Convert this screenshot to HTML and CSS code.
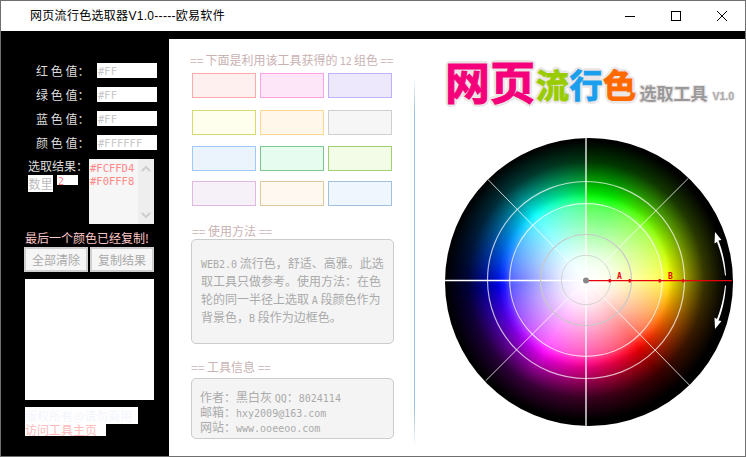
FILE: index.html
```html
<!DOCTYPE html>
<html lang="zh-CN">
<head>
<meta charset="utf-8">
<title>网页流行色选取器</title>
<link rel="stylesheet" href="styles.css">
</head>
<body>
<div class="window">
  <header class="titlebar">
    <span class="title">网页流行色选取器V1.0-----欧易软件</span>
    <div class="controls">
      <svg class="ctl" width="46" height="30" viewBox="0 0 46 30"><path d="M18 15.500h10" stroke="#000" fill="none"/></svg>
      <svg class="ctl" width="46" height="30" viewBox="0 0 46 30"><rect x="18.500" y="10.500" width="9" height="9" stroke="#000" fill="none"/></svg>
      <svg class="ctl" width="46" height="30" viewBox="0 0 46 30"><path d="M18 10l10 10M28 10l-10 10" stroke="#000" fill="none"/></svg>
    </div>
  </header>
  <div class="topbar"></div>
  <div class="content">
    <aside class="sidebar">
      <div class="fields">
        <div class="field"><span class="field-label">红 色 值&#65306;</span><span class="value"><span class="latin">#FF</span></span></div>
        <div class="field"><span class="field-label">绿 色 值&#65306;</span><span class="value"><span class="latin">#FF</span></span></div>
        <div class="field"><span class="field-label">蓝 色 值&#65306;</span><span class="value"><span class="latin">#FF</span></span></div>
        <div class="field"><span class="field-label">颜 色 值&#65306;</span><span class="value"><span class="latin">#FFFFFF</span></span></div>
      </div>
      <div class="results">
        <div class="results-left">
          <div class="results-label">选取结果&#65306;</div>
          <div class="qty">
            <span class="qty-label">数里</span>
            <span class="qty-value"><span class="latin">2</span></span>
          </div>
        </div>
        <div class="listbox">
          <div class="list-text latin">#FCFFD4<br>#F0FFF8</div>
          <div class="scroll">
            <svg width="16" height="65" viewBox="0 0 16 65"><path d="M4 12l4-4 4 4M4 54l4 4 4-4" stroke="#cfcfcf" stroke-width="2" fill="none"/></svg>
          </div>
        </div>
      </div>
      <div class="status">最后一个颜色已经复制!</div>
      <div class="buttons">
        <button class="btn">全部清除</button>
        <button class="btn">复制结果</button>
      </div>
      <div class="preview"></div>
      <div class="copyright">版权所有@请勿商用</div>
      <div class="homelink">访问工具主页</div>
    </aside>
    <main class="main">
      <section class="left">
        <h2 class="heading first">== 下面是利用该工具获得的 <span class="latin">12</span> 组色 ==</h2>
        <div class="swatches">
          <div class="sw s1"></div><div class="sw s2"></div><div class="sw s3"></div>
          <div class="sw s4"></div><div class="sw s5"></div><div class="sw s6"></div>
          <div class="sw s7"></div><div class="sw s8"></div><div class="sw s9"></div>
          <div class="sw s10"></div><div class="sw s11"></div><div class="sw s12"></div>
        </div>
        <h2 class="heading second">== 使用方法 ==</h2>
        <div class="panel usage"><span class="latin">WEB2.0</span> 流行色&#65292;舒适、高雅。此选取工具只做参考。使用方法&#65306;在色轮的同一半径上选取 <span class="latin">A</span> 段颜色作为背景色&#65292;<span class="latin">B</span> 段作为边框色。</div>
        <h2 class="heading third">== 工具信息 ==</h2>
        <div class="panel info">
          <div>作者&#65306;黑白灰 <span class="latin">QQ</span>&#65306;<span class="latin">8024114</span></div>
          <div>邮箱&#65306;<span class="latin">hxy2009@163.com</span></div>
          <div>网站&#65306;<span class="latin">www.ooeeoo.com</span></div>
        </div>
      </section>
      <div class="divider"></div>
      <section class="right">
        <div class="logo">
          <span class="lg big pink">网页</span>
          <span class="lg mid green">流</span><span class="lg mid blue">行</span><span class="lg mid orange">色</span>
          <span class="lg small">选取工具</span>
          <span class="lg ver">V1.0</span>
        </div>
        <svg class="wheel" width="288" height="288" viewBox="0 0 288 288">
          <g fill="none" stroke="#fff">
            <path d="M141 0V288" stroke-width="1.300"/>
            <path d="M0 142.500H141" stroke-width="1.300"/>
            <path d="M42.700 41.300L244.300 247M243.300 40.300L40.700 242.700" stroke-width=".8"/>
            <circle cx="141" cy="142" r="98.500" stroke-opacity=".7" stroke-width="1.200"/>
            <circle cx="141" cy="142" r="76.300" stroke-opacity=".75" stroke-width="1.200"/>
          </g>
          <g fill="none" stroke="#c8c8c8">
            <circle cx="141" cy="142" r="45.500" stroke-width="1.200"/>
            <circle cx="141" cy="142" r="24.700" stroke-opacity=".7" stroke-width="1"/>
          </g>
          <path d="M141 142.700H287" stroke="#e8000c" stroke-width="1.300"/>
          <path d="M164.700 141v3.400M184.700 141v3.400M214.700 141v3.400M238.300 141v3.400" stroke="#e8000c" stroke-width="2"/>
          <text class="mark" x="172" y="141">A</text>
          <text class="mark" x="223" y="141">B</text>
          <circle cx="141" cy="142.500" r="3" fill="#888"/>
          <path fill="#fff" d="M270 94l6.500 8-3 .5c4 10 6.500 21 7.500 35h-1c-1.500-13-4-23-8-33.500l-2.500 1.500z"/>
          <path fill="#fff" d="M270 191l6.500-8-3-.5c4-10 6.500-21 7.500-35h-1c-1.500 13-4 23-8 33.500l-2.500-1.500z"/>
        </svg>
      </section>
    </main>
  </div>
</div>
</body>
</html>
```

FILE: styles.css
```css
* { box-sizing: border-box; }
html, body { margin: 0; padding: 0; background: #fff; }
body { font-family: "Noto Sans CJK SC", "Liberation Sans", sans-serif; font-size: 12px; }
.window { width: 746px; height: 457px; border: 1px solid #6f6f6f; display: flex; flex-direction: column; overflow: hidden; background: #fff; }
.titlebar { height: 30px; flex: none; display: flex; align-items: center; justify-content: space-between; padding-left: 29px; background: #fff; }
.title { font-family: "Liberation Sans", "Noto Sans CJK SC", sans-serif; font-size: 12px; letter-spacing: .3px; color: #000; line-height: 30px; }
.controls { display: flex; }
.ctl { display: block; }
.topbar { height: 8px; flex: none; background: #000; }
.content { flex: 1; display: flex; min-height: 0; }
.latin { font-family: "DejaVu Sans Mono", "Liberation Mono", monospace; font-size: 10px; line-height: 0; }

.sidebar { width: 168px; flex: none; background: #000; padding: 24px 0 0 24px; }
.fields { display: flex; flex-direction: column; gap: 9px; }
.field { display: flex; height: 15px; align-items: center; justify-content: space-between; width: 132px; padding-left: 11px; }
.field-label { color: #ddd; font-size: 12px; line-height: 15px; white-space: nowrap; }
.value { width: 60px; height: 15px; background: #fff; color: #c8c8c8; line-height: 14px; padding-left: 1px; display: block; font-size: 12px; }
.value .latin { font-size: 10.500px; }

.results { display: flex; margin-top: 9px; padding-left: 3px; }
.results-left { width: 61px; flex: none; padding-top: 1px; }
.results-label { color: #ddd; line-height: 12px; white-space: nowrap; }
.qty { display: flex; margin-top: 3px; gap: 4px; align-items: flex-start; }
.qty-label { width: 25px; height: 17px; background: #fff; color: #bbb; line-height: 17px; font-size: 12px; text-align: center; }
.qty-value { width: 21px; height: 10px; background: #fff; color: #ff8080; line-height: 10px; padding-left: 1px; display: block; }
.listbox { width: 65px; height: 65px; display: flex; background: #f6f6f6; }
.list-text { flex: 1; color: #ff8888; line-height: 13px; padding: 3px 0 0 1px; font-size: 10.500px; }
.scroll { width: 16px; flex: none; background: #eee; }
.scroll svg { display: block; }

.status { margin-top: 7px; color: #ffc8c8; line-height: 14px; height: 14px; white-space: nowrap; }
.buttons { display: flex; gap: 2px; margin-top: 2px; margin-left: -1px; }
.btn { width: 64px; height: 25px; padding: 0; background: #f6f6f6; border: 2px solid #d0d0d0; color: #aaa; font-family: "Noto Sans CJK SC", sans-serif; font-size: 12px; }
.preview { width: 129px; height: 121px; margin-top: 7px; background: #fff; }
.copyright { width: 113px; height: 17px; margin-top: 7px; background: #fff; color: #f2f5fc; line-height: 17px; white-space: nowrap; }
.homelink { width: 81px; height: 12px; background: #fff; color: #ffb8b8; line-height: 12px; white-space: nowrap; }

.main { flex: 1; min-width: 0; display: flex; background: #fff; }
.left { width: 245px; flex: none; padding-left: 21px; }
.heading { margin: 0; font-size: 12px; font-weight: 400; color: #c9b2b2; line-height: 13px; height: 13px; white-space: nowrap; }
.first { margin-top: 14px; word-spacing: -.5px; }
.second { margin-top: 18px; margin-left: 2px; }
.third { margin-top: 16px; margin-left: 1px; }
.swatches { display: grid; grid-template-columns: repeat(3, 64px); grid-template-rows: 37px 36px 35px 25px; column-gap: 4px; margin: 7px 0 0 2px; }
.sw { height: 25px; border: 1px solid; }
.s1 { background: #fff0f0; border-color: #ffaaaa; }
.s2 { background: #fde6f8; border-color: #ffa0e8; }
.s3 { background: #eee8fd; border-color: #c0b0ff; }
.s4 { background: #ffffee; border-color: #d8d870; }
.s5 { background: #fff8ea; border-color: #ffd890; }
.s6 { background: #f6f6f6; border-color: #cfcfcf; }
.s7 { background: #ebf3fd; border-color: #a0c8f8; }
.s8 { background: #e6fcee; border-color: #80c890; }
.s9 { background: #f2fce6; border-color: #a0d070; }
.s10 { background: #f6f0f8; border-color: #e0b8e0; }
.s11 { background: #fff8f0; border-color: #e0c8a0; }
.s12 { background: #f0f6fd; border-color: #a0c0e0; }
.panel { width: 203px; margin-left: 1px; background: #f4f4f4; border: 1px solid #ccc; border-radius: 5px; color: #aaa; font-size: 12px; }
.usage { height: 105px; margin-top: 2px; padding: 14px 9px 0 9px; line-height: 18px; }
.info { height: 61px; margin-top: 5px; padding: 10px 8px 0 8px; line-height: 15px; white-space: nowrap; }

.divider { width: 1px; flex: none; margin: 38px 0 9px; background: linear-gradient(#fff, #a0c4e0 9%, #a0c4e0 90%, #fff); }
.right { flex: 1; min-width: 0; padding: 21px 0 0 30px; }
.logo { height: 78px; display: flex; align-items: flex-end; white-space: nowrap; padding-bottom: 34px; }
.lg { font-weight: 700; -webkit-text-stroke: 1px currentColor;
  text-shadow: 3px 0 #ebe6e6, -3px 0 #ebe6e6, 0 3px #ebe6e6, 0 -3px #ebe6e6, 2px 2px #ebe6e6, -2px 2px #ebe6e6, 2px -2px #ebe6e6, -2px -2px #ebe6e6; }
.big { font-size: 45px; line-height: 46px; width: 91px; }
.mid { font-size: 33px; line-height: 40px; width: 33.500px; }
.small { font-size: 17px; line-height: 20px; color: #999; width: 71px; -webkit-text-stroke-width: 0; margin-left: 3px; padding-bottom: 1px;
  text-shadow: 1px 0 #ebe6e6, -1px 0 #ebe6e6, 0 1px #ebe6e6, 0 -1px #ebe6e6, 1px 1px #ebe6e6, -1px 1px #ebe6e6, 1px -1px #ebe6e6, -1px -1px #ebe6e6; }
.ver { font-family: "Liberation Sans", sans-serif; font-size: 10.500px; line-height: 12px; color: #aaa; -webkit-text-stroke-width: 0; padding-bottom: 2px; margin-left: 2px;
  text-shadow: 1px 0 #ebe6e6, -1px 0 #ebe6e6, 0 1px #ebe6e6, 0 -1px #ebe6e6; }
.pink { color: #f5007a; }
.green { color: #99cc00; }
.blue { color: #1a9fee; }
.orange { color: #ff6a00; }
.wheel { display: block; border-radius: 50%;
  background:
    radial-gradient(circle at 141px 142px,
      #fff 0, rgba(255,255,255,.97) 12px, rgba(255,255,255,.9) 25px, rgba(255,255,255,.68) 46px, rgba(255,255,255,.36) 74px,
      rgba(255,255,255,.08) 82px, rgba(0,0,0,.14) 88px, rgba(0,0,0,.36) 98px, rgba(0,0,0,.78) 118px, #000 140px),
    conic-gradient(at 141px 142px, #00ff00 16deg, #ffff00 88deg, #ff0000 142deg, #ff00ff 210deg, #0000ff 266deg, #00ffff 322deg, #00ff00 376deg);
}
.mark { font-family: "DejaVu Sans Mono", monospace; font-size: 8px; font-weight: 700; fill: #e8000c; }
```
